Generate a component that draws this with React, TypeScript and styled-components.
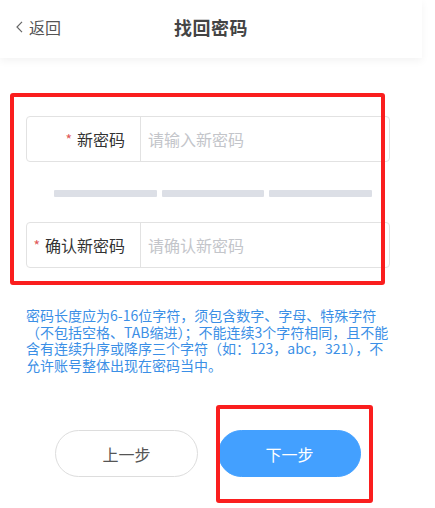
import React from "react";
import styled, { createGlobalStyle } from "styled-components";

const Global = createGlobalStyle`
  html, body { margin: 0; padding: 0; background: #ffffff; }
  body { font-family: "Noto Sans CJK SC", "Noto Sans", sans-serif; }
  * { box-sizing: border-box; }
`;

const Page = styled.div`
  position: relative;
  width: 422px;
  min-height: 508px;
  background: #ffffff;
  display: flex;
  flex-direction: column;
`;

const Header = styled.header`
  position: relative;
  height: 58px;
  padding-bottom: 5px;
  display: flex;
  align-items: center;
  justify-content: center;
  background: #ffffff;
  box-shadow: 0 3px 8px rgba(0, 0, 0, 0.05);
`;

const Back = styled.div`
  position: absolute;
  left: 16px;
  top: 0;
  bottom: 5px;
  display: flex;
  align-items: center;
  gap: 6px;
  font-size: 16px;
  color: #555;
`;

const Title = styled.h1`
  margin: 0;
  font-size: 18px;
  font-weight: 600;
  color: #444;
  letter-spacing: 0.5px;
`;

const Form = styled.div`
  display: flex;
  flex-direction: column;
  padding: 58px 0 0 26px;
`;

const Field = styled.div<{ $gap?: number }>`
  display: flex;
  width: 364px;
  height: 46px;
  margin-top: ${(p) => p.$gap ?? 0}px;
  border: 1px solid #e2e2e2;
  border-radius: 4px;
  background: #fff;
`;

const Label = styled.div`
  width: 114px;
  flex: none;
  display: flex;
  align-items: center;
  justify-content: flex-end;
  padding-right: 15px;
  border-right: 1px solid #e2e2e2;
  font-size: 16px;
  color: #333;
`;

const Star = styled.span`
  color: #e05858;
  font-size: 14px;
  margin-right: 5px;
`;

const Input = styled.input`
  flex: 1;
  min-width: 0;
  border: none;
  outline: none;
  background: transparent;
  padding: 0 0 0 7px;
  font-family: inherit;
  font-size: 16px;
  color: #333;
  &::placeholder { color: #c3c5ca; }
`;

const Strength = styled.div`
  display: grid;
  grid-template-columns: repeat(3, 1fr);
  gap: 5px;
  width: 318px;
  height: 7px;
  margin: 28px 0 0 28px;
`;

const Bar = styled.div`
  background: #dcdfe6;
  border-radius: 1px;
`;

const Hint = styled.p`
  margin: 39px 0 0 0;
  width: 366px;
  font-size: 14px;
  line-height: 16.5px;
  color: #3b8fe6;
`;

const Buttons = styled.div`
  display: flex;
  gap: 20px;
  margin: 57px 0 0 29px;
`;

const Btn = styled.button<{ $primary?: boolean }>`
  width: 143px;
  height: 47px;
  border-radius: 24px;
  font-family: inherit;
  font-size: 16px;
  border: 1px solid ${(p) => (p.$primary ? "#43a0ff" : "#dddddd")};
  background: ${(p) => (p.$primary ? "#43a0ff" : "#ffffff")};
  color: ${(p) => (p.$primary ? "#ffffff" : "#555555")};
`;

const Mark = styled.div<{ $x: number; $y: number; $w: number; $h: number }>`
  position: absolute;
  left: ${(p) => p.$x}px;
  top: ${(p) => p.$y}px;
  width: ${(p) => p.$w}px;
  height: ${(p) => p.$h}px;
  border: 4px solid #fa1e1e;
  border-radius: 3px;
  pointer-events: none;
`;

export default function App() {
  return (
    <>
      <Global />
      <Page>
        <Header>
          <Back>
            <svg width="7" height="12" viewBox="0 0 7 12">
              <polyline points="6,0.8 1,6 6,11.2" fill="none" stroke="#666" strokeWidth="1.2" />
            </svg>
            返回
          </Back>
          <Title>找回密码</Title>
        </Header>
        <Form>
          <Field>
            <Label>
              <Star>*</Star>新密码
            </Label>
            <Input type="password" placeholder="请输入新密码" />
          </Field>
          <Strength>
            <Bar />
            <Bar />
            <Bar />
          </Strength>
          <Field $gap={25}>
            <Label>
              <Star>*</Star>确认新密码
            </Label>
            <Input type="password" placeholder="请确认新密码" />
          </Field>
          <Hint>
            密码长度应为6-16位字符，须包含数字、字母、特殊字符（不包括空格、TAB缩进）；不能连续3个字符相同，且不能含有连续升序或降序三个字符（如：123，abc，321），不允许账号整体出现在密码当中。
          </Hint>
          <Buttons>
            <Btn>上一步</Btn>
            <Btn $primary>下一步</Btn>
          </Buttons>
        </Form>
        <Mark $x={10} $y={93} $w={375} $h={192} />
        <Mark $x={216} $y={405} $w={157} $h={98} />
      </Page>
    </>
  );
}
